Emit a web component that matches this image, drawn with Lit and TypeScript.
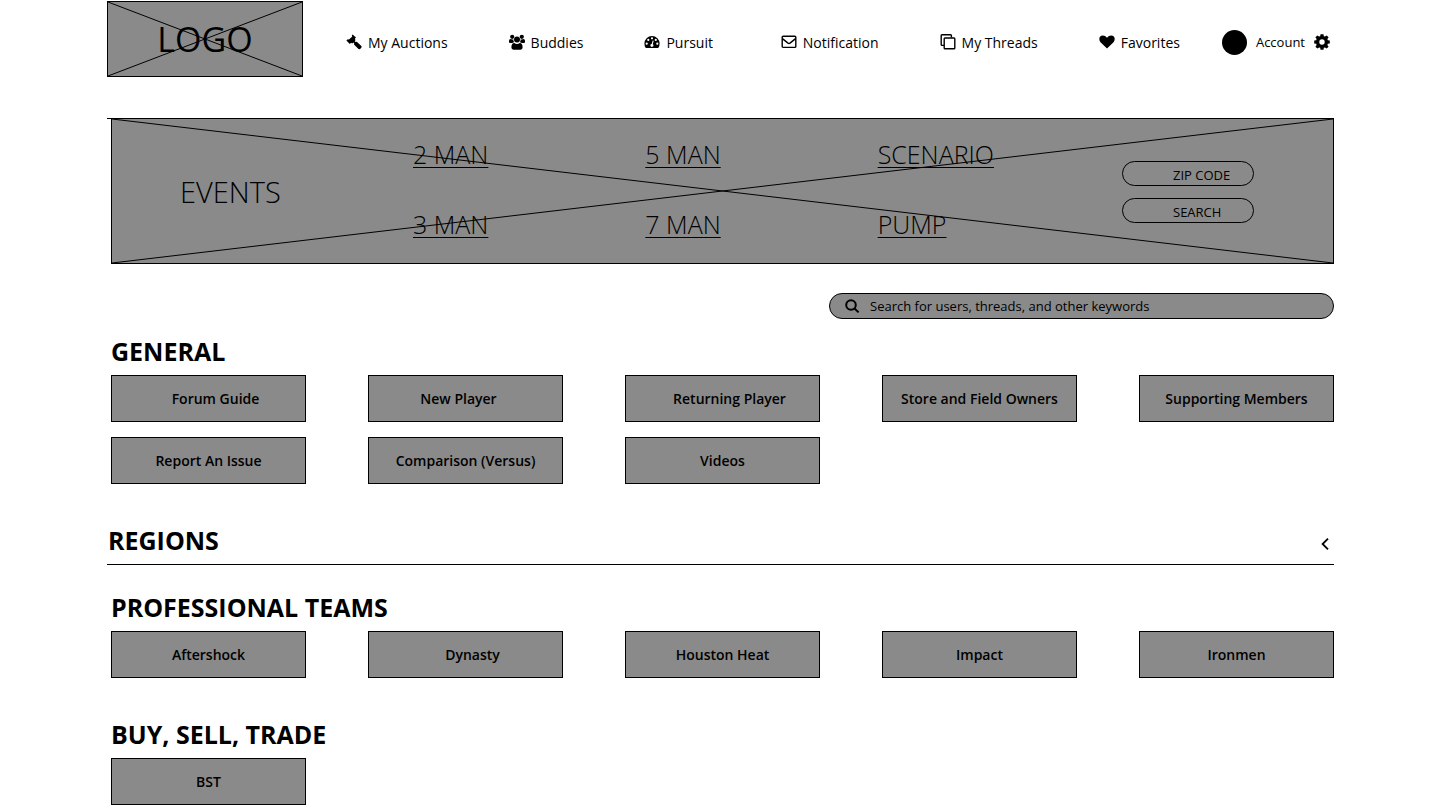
import { LitElement, html, svg, css } from "lit";
import { customElement, property, state } from "lit/decorators.js";
import { classMap } from "lit/directives/class-map.js";

type Lean = "left" | "right" | "";
interface Board {
  label: string;
  lean?: Lean;
}

const icons: Record<string, unknown> = {
  gavel: svg`<path d="M6.6 .4 10 3.6 8.8 4.8 9.5 6 8.8 7.2 9.6 8 10.8 7.7 15.6 12.2 15.5 13.6 13.9 15.2 12.5 15 8 10.4 8.2 9.3 7.3 8.5 6.2 9.4 5 8.8 3.8 10 .4 6.6 1.8 5.2 3 5.6 6.3 2.6 5.8 1.4Z"/>`,
  group: svg`<circle cx="3.2" cy="2.8" r="2.1"/><circle cx="12.8" cy="2.8" r="2.1"/><circle cx="8" cy="5.6" r="3"/><path d="M0 8.3V6.8Q0 5 1.6 5 3 5.8 4.3 5.3 4.2 7 5.1 8.3Q4 8.4 3.4 9.1H1.2Q0 9.1 0 8.3ZM16 8.3V6.8Q16 5 14.4 5 13 5.8 11.7 5.3 11.8 7 10.9 8.3 12 8.4 12.6 9.1H14.8Q16 9.1 16 8.3ZM2.4 13.6Q2.4 9 5.2 9 8 11 10.8 9 13.6 9 13.6 13.6 13.6 15.7 11.6 15.7H4.4Q2.4 15.7 2.4 13.6Z"/>`,
  gauge: svg`<path fill-rule="evenodd" d="M8 2A7.6 7.6 0 0 1 15.6 9.6Q15.6 11.8 14.6 13.6 14.4 14 13.9 14H2.1Q1.6 14 1.4 13.6.4 11.8.4 9.6A7.6 7.6 0 0 1 8 2ZM2.7 8.6a1.1 1.1 0 1 0 0 2.2 1.1 1.1 0 0 0 0-2.2ZM4.3 4.8a1.1 1.1 0 1 0 0 2.2 1.1 1.1 0 0 0 0-2.2ZM8 3.2a1.1 1.1 0 1 0 0 2.2 1.1 1.1 0 0 0 0-2.2ZM11.8 4.8a1.1 1.1 0 1 0 0 2.2 1.1 1.1 0 0 0 0-2.2ZM13.3 8.6a1.1 1.1 0 1 0 0 2.2 1.1 1.1 0 0 0 0-2.2ZM8.7 6.5 7.7 10Q6.5 10.1 6.3 11.3 6.4 12.8 8 12.9 9.7 12.7 9.6 11.1 9.4 10.5 8.8 10.2L9.7 6.8Z"/>`,
  mail: svg`<rect class="line" x="1.2" y="2.2" width="13.6" height="11.2" rx="1"/><path class="line" d="M1.4 4.6 7 9.1Q8 9.8 9 9.1L14.6 4.6"/>`,
  copy: svg`<rect class="line" x="4.2" y="4" width="10.6" height="10.8" rx=".8"/><path class="line" d="M4 11.4H2Q1.2 11.4 1.2 10.6V1.6Q1.2.8 2 .8H10.6Q11.4.8 11.4 1.6V3.6"/>`,
  heart: svg`<path d="M8 14.6 1.5 8.3Q.3 7 .3 5 .4 1.8 3.8 1.5 6.3 1.5 8 3.8 9.7 1.5 12.2 1.5 15.6 1.8 15.7 5 15.7 7 14.5 8.3Z"/>`,
  gear: svg`<path fill-rule="evenodd" d="M6.5.2H9.5L9.8 2.2 10.9 2.6 12.7 1.4 14.6 3.3 13.4 5.1 13.8 6.2 15.8 6.5V9.5L13.8 9.8 13.4 10.9 14.6 12.7 12.7 14.6 10.9 13.4 9.8 13.8 9.5 15.8H6.5L6.2 13.8 5.1 13.4 3.3 14.6 1.4 12.7 2.6 10.9 2.2 9.8 .2 9.5V6.5L2.2 6.2 2.6 5.1 1.4 3.3 3.3 1.4 5.1 2.6 6.2 2.2ZM8 5.3a2.7 2.7 0 1 0 0 5.4 2.7 2.7 0 0 0 0-5.4Z"/>`,
  search: svg`<circle class="bold" cx="7" cy="7" r="4.8"/><path class="bold" d="M10.5 10.5 14.6 14.4"/>`,
  chevron: svg`<path class="chev" d="M11 2.6 5.6 8 11 13.4"/>`,
};

@customElement("wf-icon")
class WfIcon extends LitElement {
  @property() name = "";

  static styles = css`
    :host {
      display: block;
      width: 16px;
      height: 16px;
      flex: none;
    }
    .glyph {
      display: block;
      width: 100%;
      height: 100%;
      fill: currentColor;
    }
    .line,
    .bold,
    .chev {
      fill: none;
      stroke: currentColor;
      stroke-width: 1.4;
    }
    .bold {
      stroke-width: 2;
    }
    .chev {
      stroke-width: 1.8;
    }
  `;

  render() {
    return html`<svg class="glyph" viewBox="0 0 16 16" aria-hidden="true">${icons[this.name]}</svg>`;
  }
}

/* Diagonal cross that marks a picture placeholder. */
@customElement("wf-cross")
class WfCross extends LitElement {
  static styles = css`
    :host {
      position: absolute;
      inset: 0;
      pointer-events: none;
    }
    .lines {
      display: block;
      width: 100%;
      height: 100%;
      stroke: #000;
      stroke-width: 1;
    }
  `;

  render() {
    return html`<svg class="lines" viewBox="0 0 100 100" preserveAspectRatio="none" aria-hidden="true">
      <path d="M0 0 100 100M0 100 100 0" vector-effect="non-scaling-stroke" />
    </svg>`;
  }
}

@customElement("board-grid")
class BoardGrid extends LitElement {
  @property() heading = "";
  @property({ attribute: false }) boards: Board[] = [];

  static styles = css`
    :host {
      display: block;
      margin-left: 4px;
    }
    .title {
      margin: 0 0 8px;
      font-size: 25px;
      line-height: 32px;
      font-weight: 700;
    }
    .grid {
      display: grid;
      grid-template-columns: repeat(5, 1fr);
      gap: 15px 62px;
    }
    .board {
      box-sizing: border-box;
      height: 47px;
      padding: 0;
      border: 1px solid #000;
      background: #8a8a8a;
      color: #000;
      font: inherit;
      font-size: 14px;
      font-weight: 600;
      white-space: nowrap;
      cursor: pointer;
    }
    .right {
      padding-left: 14px;
    }
    .left {
      padding-right: 14px;
    }
  `;

  render() {
    return html`
      <h2 class="title">${this.heading}</h2>
      <div class="grid">
        ${this.boards.map(
          (b) => html`<button
            type="button"
            class=${classMap({ board: true, right: b.lean === "right", left: b.lean === "left" })}
          >${b.label}</button>`
        )}
      </div>
    `;
  }
}

@customElement("app-root")
class AppRoot extends LitElement {
  @state() private regionsOpen = false;

  private nav = [
    [
      ["gavel", "My Auctions"],
      ["group", "Buddies"],
      ["gauge", "Pursuit"],
    ],
    [
      ["mail", "Notification"],
      ["copy", "My Threads"],
      ["heart", "Favorites"],
    ],
  ];

  private events = ["2 MAN", "5 MAN", "SCENARIO", "3 MAN", "7 MAN", "PUMP"];

  private general: Board[] = [
    { label: "Forum Guide", lean: "right" },
    { label: "New Player", lean: "left" },
    { label: "Returning Player", lean: "right" },
    { label: "Store and Field Owners" },
    { label: "Supporting Members" },
    { label: "Report An Issue" },
    { label: "Comparison (Versus)" },
    { label: "Videos" },
  ];

  private teams: Board[] = [
    { label: "Aftershock" },
    { label: "Dynasty", lean: "right" },
    { label: "Houston Heat" },
    { label: "Impact" },
    { label: "Ironmen" },
  ];

  private trade: Board[] = [{ label: "BST" }];

  static styles = css`
    :host {
      display: block;
      padding: 1px 107px 5px;
      background: #fff;
      color: #000;
      font-family: "Open Sans", "Noto Sans", sans-serif;
      font-size: 14px;
    }
    .header {
      display: flex;
      align-items: center;
    }
    .logo {
      position: relative;
      box-sizing: border-box;
      display: grid;
      place-items: center;
      width: 196px;
      height: 76px;
      flex: none;
      border: 1px solid #000;
      background: #8a8a8a;
      color: #000;
      font-size: 34px;
      line-height: 74px;
      text-decoration: none;
    }
    .nav {
      display: flex;
      flex: 1;
      justify-content: space-between;
      padding: 6px 0 0 43px;
    }
    .group {
      display: flex;
      gap: 61px;
    }
    .link,
    .account {
      display: flex;
      align-items: center;
      gap: 6px;
      color: #000;
      text-decoration: none;
      white-space: nowrap;
    }
    .account {
      gap: 9px;
      margin-left: 42px;
      padding: 6px 4px 0 0;
      font-size: 13px;
    }
    .avatar {
      width: 25px;
      height: 25px;
      border-radius: 50%;
      background: #000;
    }
    .banner {
      margin-top: 41px;
      border-top: 1px solid #000;
    }
    .events {
      position: relative;
      display: grid;
      grid-template-columns: 233fr 697fr 223fr;
      align-items: center;
      box-sizing: border-box;
      height: 145px;
      margin-left: 4px;
      padding: 2px 0 0 68px;
      border: 1px solid #000;
      border-top: 0;
      background: #8a8a8a;
    }
    .events-title {
      margin: 0;
      font-size: 29px;
      line-height: 40px;
      font-weight: 300;
    }
    .event-links {
      display: grid;
      grid-template-columns: repeat(3, 1fr);
      row-gap: 30px;
      justify-items: start;
      padding-bottom: 6px;
    }
    .event {
      color: #000;
      font-size: 25px;
      line-height: 40px;
      font-weight: 300;
      text-decoration-thickness: 1px;
      text-underline-offset: 3px;
      text-decoration-skip-ink: none;
    }
    .finder {
      display: grid;
      gap: 12px;
      width: 132px;
      margin-left: 12px;
    }
    .pill {
      box-sizing: border-box;
      width: 100%;
      height: 25px;
      padding: 2px 0 0 50px;
      border: 1px solid #000;
      border-radius: 13px;
      background: transparent;
      color: #000;
      font: inherit;
      font-size: 13px;
      text-align: left;
    }
    .pill::placeholder,
    .query::placeholder {
      color: #000;
      opacity: 1;
    }
    .search {
      display: flex;
      align-items: center;
      gap: 10px;
      box-sizing: border-box;
      width: 505px;
      height: 26px;
      margin: 29px 0 16px auto;
      padding: 0 14px;
      border: 1px solid #000;
      border-radius: 13px;
      background: #8a8a8a;
    }
    .query {
      flex: 1;
      min-width: 0;
      padding: 0;
      border: 0;
      outline: 0;
      background: transparent;
      color: #000;
      font: inherit;
      font-size: 13px;
    }
    .regions {
      margin: 40px 0 26px;
      border-bottom: 1px solid #000;
      font-size: 25px;
      line-height: 32px;
      font-weight: 700;
    }
    .toggle {
      display: flex;
      align-items: center;
      justify-content: space-between;
      width: 100%;
      padding: 0 1px 8px 1px;
      border: 0;
      background: none;
      color: #000;
      font: inherit;
      cursor: pointer;
    }
    .arrow {
      padding-top: 8px;
    }
    .open {
      transform: rotate(-90deg);
    }
    .trade {
      margin-top: 40px;
    }
  `;

  render() {
    return html`
      <header class="header">
        <a class="logo" href="#">LOGO<wf-cross></wf-cross></a>
        <nav class="nav">
          ${this.nav.map(
            (group) => html`<div class="group">
              ${group.map(
                ([icon, label]) => html`<a class="link" href="#"><wf-icon name=${icon}></wf-icon>${label}</a>`
              )}
            </div>`
          )}
        </nav>
        <a class="account" href="#"><span class="avatar"></span>Account<wf-icon name="gear"></wf-icon></a>
      </header>

      <section class="banner">
        <div class="events">
          <wf-cross></wf-cross>
          <h1 class="events-title">EVENTS</h1>
          <div class="event-links">
            ${this.events.map((e) => html`<a class="event" href="#">${e}</a>`)}
          </div>
          <form class="finder" @submit=${(e: Event) => e.preventDefault()}>
            <input class="pill" type="text" placeholder="ZIP CODE" aria-label="ZIP code" />
            <button class="pill" type="submit">SEARCH</button>
          </form>
        </div>
      </section>

      <label class="search">
        <wf-icon name="search"></wf-icon>
        <input
          class="query"
          type="text"
          placeholder="Search for users, threads, and other keywords"
          aria-label="Search for users, threads, and other keywords"
        />
      </label>

      <board-grid heading="GENERAL" .boards=${this.general}></board-grid>

      <h2 class="regions">
        <button
          class="toggle"
          type="button"
          aria-expanded=${this.regionsOpen}
          @click=${() => (this.regionsOpen = !this.regionsOpen)}
        >
          REGIONS
          <span class="arrow"><wf-icon name="chevron" class=${classMap({ open: this.regionsOpen })}></wf-icon></span>
        </button>
      </h2>

      <board-grid heading="PROFESSIONAL TEAMS" .boards=${this.teams}></board-grid>
      <board-grid class="trade" heading="BUY, SELL, TRADE" .boards=${this.trade}></board-grid>
    `;
  }
}
